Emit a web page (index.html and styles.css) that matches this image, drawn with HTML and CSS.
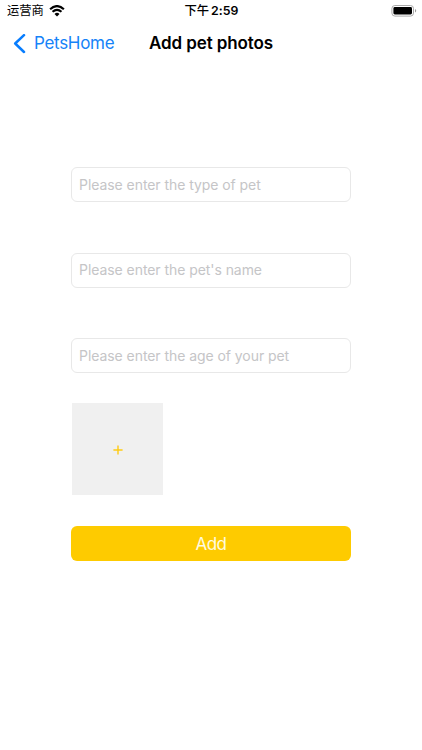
FILE: index.html
```html
<!DOCTYPE html>
<html lang="en">
<head>
<meta charset="utf-8">
<meta name="viewport" content="width=device-width">
<title>Add pet photos</title>
<link rel="stylesheet" href="styles.css">
</head>
<body>
<div class="status">
  <div class="carrier">
    <span lang="zh-CN">运营商</span>
    <svg class="wifi" width="16" height="12" viewBox="0 0 16 12" fill="none" stroke="#000">
      <path d="M1.1 4.2Q8-2 14.9 4.2" stroke-width="2.2"/>
      <path d="M3.5 6.8Q8 2.9 12.5 6.8" stroke-width="2.1"/>
      <path d="M5.5 8.9Q8 6.8 10.5 8.9L8 11.4Z" fill="#000" stroke="none"/>
    </svg>
  </div>
  <div class="time"><span class="period" lang="zh-CN">下午</span><span class="clock">2:59</span></div>
  <svg class="battery" width="26" height="12" viewBox="0 0 26 12">
    <rect x=".9" y=".5" width="21.6" height="10.6" rx="3" fill="#fff" stroke="#aaa"/>
    <rect x="2.4" y="2" width="18.6" height="7.4" rx="1.4" fill="#000"/>
    <path d="M24 4v3.6q1.2-.5 1.2-1.8T24 4Z" fill="#999"/>
  </svg>
</div>
<header class="nav">
  <a class="back">
    <svg width="13" height="20" viewBox="0 0 13 20" fill="none" stroke="#087dfe" stroke-width="2.5" stroke-linecap="round" stroke-linejoin="round"><path d="M11 1.2 2.2 9.5l8.8 8.5"/></svg>
    <span>PetsHome</span>
  </a>
  <h1 class="title">Add pet photos</h1>
</header>
<main class="form">
  <div class="field"><span class="hint">Please enter the type of pet</span></div>
  <div class="field"><span class="hint">Please enter the pet's name</span></div>
  <div class="field"><span class="hint">Please enter the age of your pet</span></div>
  <div class="photo">
    <svg width="10" height="10" viewBox="0 0 10 10" stroke="#fecb14" stroke-width="1.4"><path d="M5 .4v9.2M.4 5h9.2"/></svg>
  </div>
  <div class="submit">Add</div>
</main>
</body>
</html>
```
FILE: styles.css
```css
* { box-sizing: border-box; }
body {
  margin: 0;
  height: 750px;
  overflow: hidden;
  background: #fff;
  color: #000;
  font-family: Inter, "Noto Sans CJK SC", sans-serif;
}
.status {
  display: grid;
  grid-template-columns: 1fr auto 1fr;
  align-items: center;
  height: 22px;
  padding: 0 6px 0 7px;
  font-size: 12.3px;
  line-height: 22px;
}
.carrier { display: flex; align-items: center; gap: 5px; }
.time { display: flex; gap: 2px; font-weight: 600; letter-spacing: .1px; }
.period { font-weight: 500; letter-spacing: 0; }
.battery { justify-self: end; margin-right: -1px; }
.nav {
  display: grid;
  grid-template-columns: 1fr auto 1fr;
  align-items: center;
  height: 43px;
  padding: 0 13px;
  line-height: 43px;
}
.back {
  display: flex;
  align-items: center;
  gap: 8px;
  color: #1683f8;
  font-size: 17px;
  letter-spacing: -.3px;
}
.title { margin: 0; font-size: 17px; font-weight: 600; letter-spacing: -.1px; }
.form { width: 280px; margin: 102px auto 0; }
.field {
  display: flex;
  align-items: center;
  height: 35px;
  margin-bottom: 50.5px;
  padding-left: 7px;
  border: 1px solid #e8e8e8;
  border-radius: 6px;
}
.hint { color: #c5c5c7; font-size: 14px; line-height: 20px; letter-spacing: -.06px; white-space: nowrap; }
.photo {
  display: grid;
  place-items: center;
  width: 91px;
  height: 92px;
  margin: -20.5px 0 0 1px;
  padding-top: 2px;
  background: #f0f0f0;
}
.submit {
  height: 35px;
  margin-top: 30.5px;
  border-radius: 6px;
  background: #fecb00;
  color: #fffbe0;
  font-size: 17px;
  letter-spacing: -.5px;
  line-height: 36px;
  text-align: center;
}
```
